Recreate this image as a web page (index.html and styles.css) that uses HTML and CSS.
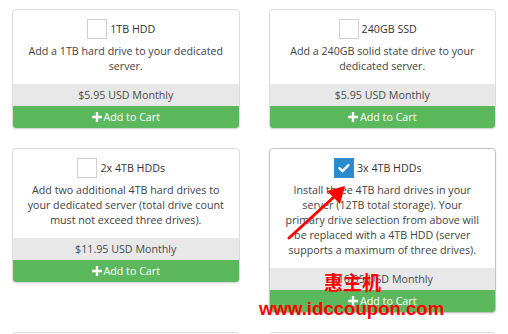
FILE: index.html
```html
<!DOCTYPE html>
<html>
<head>
<meta charset="utf-8">
<link rel="stylesheet" href="styles.css">
</head>
<body>
<div class="page">
  <div class="grid">
    <div class="card">
      <div class="head"><span class="cb"></span><span class="title">1TB HDD</span></div>
      <p class="desc">Add a 1TB hard drive to your dedicated server.</p>
      <div class="price">$5.95 USD Monthly</div>
      <div class="btn"><svg class="plus" viewBox="0 0 10 10"><path d="M3.8 0h2.4v3.8H10v2.4H6.2V10H3.8V6.2H0V3.8h3.8z"/></svg>Add to Cart</div>
    </div>
    <div class="card">
      <div class="head"><span class="cb"></span><span class="title">240GB SSD</span></div>
      <p class="desc">Add a 240GB solid state drive to your dedicated server.</p>
      <div class="price">$5.95 USD Monthly</div>
      <div class="btn"><svg class="plus" viewBox="0 0 10 10"><path d="M3.8 0h2.4v3.8H10v2.4H6.2V10H3.8V6.2H0V3.8h3.8z"/></svg>Add to Cart</div>
    </div>
    <div class="card">
      <div class="head"><span class="cb"></span><span class="title">2x 4TB HDDs</span></div>
      <p class="desc">Add two additional 4TB hard drives to your dedicated server (total drive count must not exceed three drives).</p>
      <div class="price">$11.95 USD Monthly</div>
      <div class="btn"><svg class="plus" viewBox="0 0 10 10"><path d="M3.8 0h2.4v3.8H10v2.4H6.2V10H3.8V6.2H0V3.8h3.8z"/></svg>Add to Cart</div>
    </div>
    <div class="card selected">
      <div class="head"><span class="cb checked"><svg viewBox="0 0 20 20"><path d="M5.5 10.2l3 3 6-6" fill="none" stroke="#fff" stroke-width="2.4" stroke-linecap="round" stroke-linejoin="round"/></svg></span><span class="title">3x 4TB HDDs</span></div>
      <p class="desc">Install three 4TB hard drives in your server (12TB total storage). Your<br>primary drive selection from above will be replaced with a 4TB HDD (server supports a maximum of three drives).</p>
      <div class="price">$16.95 USD Monthly</div>
      <div class="btn"><svg class="plus" viewBox="0 0 10 10"><path d="M3.8 0h2.4v3.8H10v2.4H6.2V10H3.8V6.2H0V3.8h3.8z"/></svg>Add to Cart</div>
    </div>
    <div class="card blank"></div>
    <div class="card blank"></div>
  </div>
  <svg class="arrow" viewBox="0 0 508 334" width="508" height="334">
    <line x1="289" y1="238" x2="335" y2="196" stroke="#f00" stroke-width="3" stroke-linecap="round"/>
    <polygon points="345,186 327,191 340,204" fill="#f00"/>
  </svg>
  <div class="mark-cn">惠主机</div>
  <div class="mark-url">www.idccoupon.com</div>
</div>
</body>
</html>
```
FILE: styles.css
```css
html, body {
  margin: 0;
  padding: 0;
  overflow: hidden;
  background: #fff;
}
.page {
  position: relative;
  width: 508px;
  height: 334px;
  font-family: "Open Sans", "Liberation Sans", sans-serif;
  font-size: 10.7px;
  color: #444;
}
.grid {
  display: grid;
  grid-template-columns: 1fr 1fr;
  column-gap: 29px;
  row-gap: 19px;
  padding: 9px 12px 0;
  align-items: start;
}
.card {
  border: 1px solid #dcdcdc;
  border-radius: 4px;
  overflow: hidden;
  background: #fff;
  box-shadow: 0 1px 1px rgba(0,0,0,0.06);
}
.card.selected {
  border-color: #c4c4c4;
  box-shadow: 0 1px 2px rgba(0,0,0,0.12);
}
.card.blank { height: 120px; }
.head {
  display: flex;
  justify-content: center;
  align-items: center;
  gap: 3px;
  padding: 9px 9px 0 0;
  height: 20px;
}
.cb {
  width: 18px;
  height: 18px;
  border: 1px solid #cfcfcf;
  background: #fff;
  display: flex;
}
.cb.checked {
  width: 20px;
  height: 20px;
  border: 0;
  background: #2b8ccd;
}
.cb svg { width: 20px; height: 20px; }
.title {
  color: #333;
  line-height: 20px;
}
.desc {
  margin: 5px 0 0;
  padding: 0 10px 10px;
  line-height: 15px;
  text-align: center;
  color: #444;
}
.price {
  background: #e8e8e8;
  height: 22px;
  line-height: 22px;
  text-align: center;
  color: #4a4a4a;
}
.btn {
  background: #5cb85c;
  height: 22px;
  line-height: 22px;
  color: #fff;
  text-align: center;
  display: flex;
  justify-content: center;
  align-items: center;
  gap: 2px;
}
.plus {
  width: 10px;
  height: 10px;
  fill: #fff;
}
.arrow {
  position: absolute;
  left: 0;
  top: 0;
  pointer-events: none;
}
.mark-cn {
  position: absolute;
  left: 324px;
  top: 270px;
  font-family: "Noto Sans CJK SC", sans-serif;
  font-weight: 700;
  font-size: 19px;
  line-height: 24px;
  color: #f00;
}
.mark-url {
  position: absolute;
  left: 259px;
  top: 297px;
  font-family: "Liberation Sans", Arial, sans-serif;
  font-weight: 700;
  font-size: 18.6px;
  line-height: 24px;
  color: #f00;
}
```
